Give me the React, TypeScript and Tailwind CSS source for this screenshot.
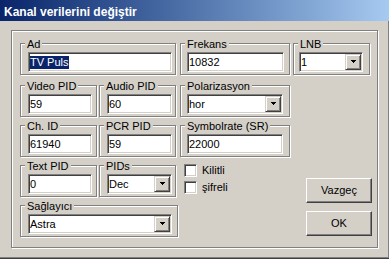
import React from "react";

const sunken =
  "bg-white border border-t-[#808080] border-l-[#808080] border-b-white border-r-white shadow-[inset_1px_1px_0_#404040,inset_-1px_-1px_0_#d4d0c8]";
const raised =
  "border border-t-white border-l-white border-b-[#404040] border-r-[#404040] shadow-[inset_-1px_-1px_0_#808080] bg-[#d4d0c8]";
const comboBtn =
  "border border-t-[#d4d0c8] border-l-[#d4d0c8] border-b-[#404040] border-r-[#404040] shadow-[inset_1px_1px_0_#fff,inset_-1px_-1px_0_#808080] bg-[#d4d0c8]";

function Group({
  label,
  className,
  inner,
  children,
}: {
  label: string;
  className: string;
  inner: string;
  children: React.ReactNode;
}) {
  return (
    <div
      className={`relative h-[32px] shrink-0 border border-[#808080] shadow-[inset_1px_1px_0_#fff,1px_1px_0_#fff] ${className}`}
    >
      <span className="absolute -top-[6px] left-[4px] px-[2px] bg-[#d4d0c8] leading-[13px] whitespace-nowrap">
        {label}
      </span>
      <div className={`pt-[8px] ${inner}`}>{children}</div>
    </div>
  );
}

function Edit({ w, value, selected }: { w: string; value: string; selected?: boolean }) {
  return (
    <div className={`${w} h-[20px] ${sunken} flex items-center pl-[1px] leading-[13px]`}>
      {selected ? <span className="bg-[#0a246a] text-white">{value}</span> : <span>{value}</span>}
    </div>
  );
}

function Arrow() {
  return (
    <svg width="7" height="4" viewBox="0 0 7 4" shapeRendering="crispEdges">
      <rect x="1" y="0" width="5" height="1" fill="#000" />
      <rect x="2" y="1" width="3" height="1" fill="#000" />
      <rect x="3" y="2" width="1" height="1" fill="#000" />
    </svg>
  );
}

function Combo({ w, value }: { w: string; value: string }) {
  return (
    <div className={`${w} h-[20px] ${sunken} flex items-center pl-[1px] pr-[1px] leading-[13px]`}>
      <span className="flex-1">{value}</span>
      <div className={`w-[16px] h-[16px] ${comboBtn} flex items-center justify-center`}>
        <Arrow />
      </div>
    </div>
  );
}

function Check({ label }: { label: string }) {
  return (
    <div className="flex items-center gap-[5px] h-[13px]">
      <div className={`w-[13px] h-[13px] ${sunken}`} />
      <span className="leading-[13px]">{label}</span>
    </div>
  );
}

export default function App() {
  return (
    <div className="w-[389px] h-[259px] bg-[#d4d0c8] flex flex-col overflow-hidden text-[11px] text-black font-['Liberation_Sans',Arial,sans-serif] border-b border-[#404040]">
      <div className="h-[21px] shrink-0 bg-gradient-to-r from-[#0a246a] to-[#a6caf0] pl-[4px] pt-[5px] text-white font-bold text-[12px] leading-[14px] whitespace-nowrap">
        Kanal verilerini değiştir
      </div>
      <div className="flex-1 border-b border-r border-[#808080] pt-[9px] pl-[11px]">
        <div className="w-[367px] h-[218px] border border-[#808080] shadow-[inset_1px_1px_0_#fff,1px_1px_0_#fff] pt-[12px] pl-[8px] flex">
          <div className="flex flex-col">
            <div className="flex mb-[10px]">
              <Group label="Ad" className="w-[156px]" inner="pl-[7px]">
                <Edit w="w-[144px]" value="TV Puls" selected />
              </Group>
              <Group label="Frekans" className="w-[110px] ml-[4px]" inner="pl-[6px]">
                <Edit w="w-[97px]" value="10832" />
              </Group>
            </div>
            <div className="flex mb-[8px]">
              <Group label="Video PID" className="w-[77px]" inner="pl-[7px]">
                <Edit w="w-[64px]" value="59" />
              </Group>
              <Group label="Audio PID" className="w-[77px] ml-[2px]" inner="pl-[7px]">
                <Edit w="w-[65px]" value="60" />
              </Group>
              <Group label="Polarizasyon" className="w-[110px] ml-[4px]" inner="pl-[6px]">
                <Combo w="w-[96px]" value="hor" />
              </Group>
            </div>
            <div className="flex mb-[8px]">
              <Group label="Ch. ID" className="w-[77px]" inner="pl-[7px]">
                <Edit w="w-[64px]" value="61940" />
              </Group>
              <Group label="PCR PID" className="w-[77px] ml-[2px]" inner="pl-[7px]">
                <Edit w="w-[65px]" value="59" />
              </Group>
              <Group label="Symbolrate (SR)" className="w-[110px] ml-[4px]" inner="pl-[6px]">
                <Edit w="w-[96px]" value="22000" />
              </Group>
            </div>
            <div className="flex mb-[8px]">
              <Group label="Text PID" className="w-[77px]" inner="pl-[7px]">
                <Edit w="w-[64px]" value="0" />
              </Group>
              <Group label="PIDs" className="w-[77px] ml-[2px]" inner="pl-[7px]">
                <Combo w="w-[65px]" value="Dec" />
              </Group>
              <div className="ml-[8px] -mt-[1px] flex flex-col gap-[4px]">
                <Check label="Kilitli" />
                <Check label="şifreli" />
              </div>
            </div>
            <div className="flex">
              <Group label="Sağlayıcı" className="w-[158px]" inner="pl-[7px]">
                <Combo w="w-[144px]" value="Astra" />
              </Group>
            </div>
          </div>
          <div className="ml-[3px] flex flex-col">
            <Group label="LNB" className="w-[77px]" inner="pl-[5px]">
              <Combo w="w-[64px]" value="1" />
            </Group>
            <button className={`ml-[13px] mt-[103px] w-[66px] h-[25px] ${raised} flex items-center justify-center leading-[13px]`}>
              Vazgeç
            </button>
            <button className={`ml-[13px] mt-[8px] w-[66px] h-[25px] ${raised} flex items-center justify-center leading-[13px]`}>
              OK
            </button>
          </div>
        </div>
      </div>
    </div>
  );
}
